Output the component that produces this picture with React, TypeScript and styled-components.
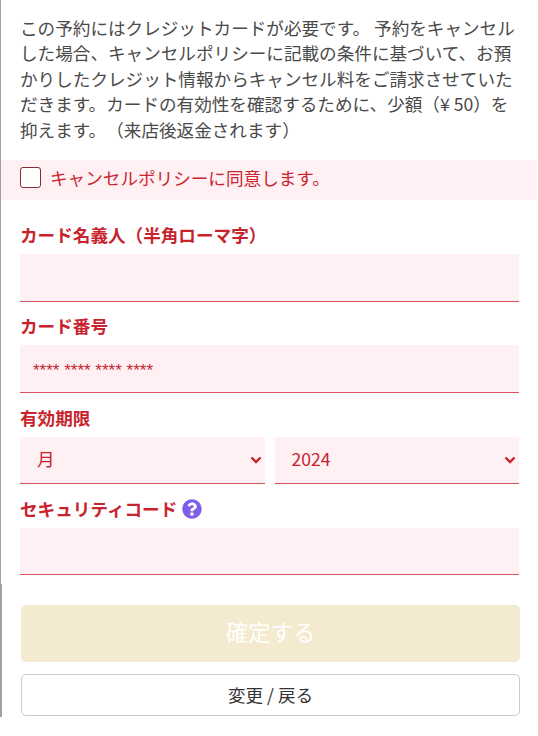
import React from 'react';
import styled, { createGlobalStyle } from 'styled-components';
import { FaQuestionCircle } from 'react-icons/fa';

const GlobalStyle = createGlobalStyle`
  html, body {
    margin: 0;
    padding: 0;
    background: #fff;
  }
  body {
    font-family: "Noto Sans CJK JP", "Noto Sans", sans-serif;
    text-spacing-trim: space-all;
    overflow: hidden;
  }
`;

const Page = styled.div`
  position: relative;
  width: 538px;
  height: 736px;
  box-sizing: border-box;
  padding-top: 15px;
  background: #fff;
`;

const EdgeLine = styled.div`
  position: absolute;
  left: 0;
  top: 0;
  width: 1px;
  height: 584px;
  background: #a0a0a0;
`;

const EdgeLineLower = styled(EdgeLine)`
  top: 584px;
  width: 2px;
  height: 133px;
`;

const Notice = styled.p`
  margin: 0 0 18px;
  padding: 0 18px 0 20px;
  font-size: 17.6px;
  line-height: 25.4px;
  color: #4a4a4a;
`;

const AgreeBand = styled.label`
  display: flex;
  align-items: center;
  gap: 9px;
  height: 40px;
  margin: 0 1px;
  padding: 0 0 6px 19px;
  box-sizing: border-box;
  border-radius: 3px;
  background: #fff0f3;
  color: #cb2531;
  font-size: 17.6px;
`;

const CheckBox = styled.input.attrs({ type: 'checkbox' })`
  appearance: none;
  width: 21px;
  height: 21px;
  margin: 0;
  border: 1px solid #8c2a30;
  border-radius: 3px;
  background: #fff;
  box-sizing: border-box;
`;

const Form = styled.form`
  display: flex;
  flex-direction: column;
  padding: 22px 19px 0 20px;
`;

const Label = styled.div`
  display: flex;
  align-items: center;
  gap: 5px;
  height: 26px;
  margin-bottom: 6px;
  padding-bottom: 2px;
  box-sizing: border-box;
  color: #c8242e;
  font-size: 17.6px;
  font-weight: 700;
`;

const TextField = styled.input<{ $gap?: number }>`
  display: block;
  width: 100%;
  height: ${(props) => props.height || 48}px;
  margin-bottom: ${(props) => props.$gap || 11}px;
  padding: 5px 13px 0;
  box-sizing: border-box;
  border: 0;
  border-bottom: 1px solid #d9535c;
  border-radius: 0;
  background: #fff0f3;
  color: #c8242e;
  outline: none;
  font-family: "Liberation Sans", sans-serif;
  font-size: 17px;

  &::placeholder {
    color: #c8242e;
    opacity: 1;
  }
`;

const SelectRow = styled.div`
  display: flex;
  gap: 10px;
  margin-bottom: 12px;
`;

const SelectWrap = styled.div`
  position: relative;
  flex: 1;
`;

const Select = styled.select`
  display: block;
  width: 100%;
  height: 47px;
  padding: 0 0 3px 17px;
  box-sizing: border-box;
  appearance: none;
  border: 0;
  border-bottom: 1px solid #d9535c;
  border-radius: 0;
  background: #fff0f3;
  color: #c8242e;
  outline: none;
  font-family: "Noto Sans CJK JP", "Noto Sans", sans-serif;
  font-size: 17.6px;
`;

const Chevron = styled.svg`
  position: absolute;
  right: 3px;
  top: 19px;
  width: 12px;
  height: 8px;
  pointer-events: none;
`;

const HelpIcon = styled(FaQuestionCircle)`
  width: 20px;
  height: 20px;
  margin-top: 2px;
  color: #7f5fea;
`;

const Actions = styled.div`
  display: flex;
  flex-direction: column;
  gap: 12px;
  margin: 19px 0 0 1px;
  width: 499px;
`;

const ConfirmButton = styled.button`
  height: 57px;
  padding: 0 0 5px;
  border: 1px solid #f2e9d2;
  border-radius: 5px;
  background: #f4ead0;
  color: #fff;
  font-family: inherit;
  font-size: 22.4px;
`;

const BackButton = styled.button`
  height: 42px;
  padding: 0 0 2px;
  border: 1px solid #cccccc;
  border-radius: 5px;
  background: #fff;
  color: #333;
  font-family: inherit;
  font-size: 17.6px;
`;

const SelectChevron: React.FC = () => (
  <Chevron viewBox="0 0 12 8">
    <path d="M1.5 1.5 L6 6 L10.5 1.5" fill="none" stroke="#c8242e" strokeWidth="2.4" />
  </Chevron>
);

const App: React.FC = () => {
  return (
    <Page>
      <GlobalStyle />
      <EdgeLine />
      <EdgeLineLower />
      <Notice>
        この予約にはクレジットカードが必要です。 予約をキャンセルした場合、キャンセルポリシーに記載の条件に基づいて、お預かりしたクレジット情報からキャンセル料をご請求させていただきます。カードの有効性を確認するために、少額（¥ 50）を抑えます。（来店後返金されます）
      </Notice>
      <AgreeBand>
        <CheckBox />
        キャンセルポリシーに同意します。
      </AgreeBand>
      <Form>
        <Label>カード名義人（半角ローマ字）</Label>
        <TextField />
        <Label>カード番号</Label>
        <TextField placeholder="**** **** **** ****" $gap={12} />
        <Label>有効期限</Label>
        <SelectRow>
          <SelectWrap>
            <Select defaultValue="月">
              <option>月</option>
            </Select>
            <SelectChevron />
          </SelectWrap>
          <SelectWrap>
            <Select defaultValue="2024">
              <option>2024</option>
            </Select>
            <SelectChevron />
          </SelectWrap>
        </SelectRow>
        <Label>
          セキュリティコード
          <HelpIcon />
        </Label>
        <TextField height={47} />
        <Actions>
          <ConfirmButton type="button" disabled>確定する</ConfirmButton>
          <BackButton type="button">変更 / 戻る</BackButton>
        </Actions>
      </Form>
    </Page>
  );
};

export default App;
